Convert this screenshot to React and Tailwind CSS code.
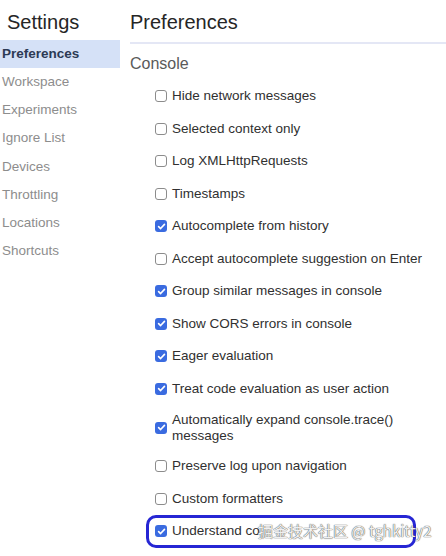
import React from 'react';

const navItems = [
  'Preferences',
  'Workspace',
  'Experiments',
  'Ignore List',
  'Devices',
  'Throttling',
  'Locations',
  'Shortcuts',
];

const options = [
  { label: 'Hide network messages', checked: false },
  { label: 'Selected context only', checked: false },
  { label: 'Log XMLHttpRequests', checked: false },
  { label: 'Timestamps', checked: false },
  { label: 'Autocomplete from history', checked: true },
  { label: 'Accept autocomplete suggestion on Enter', checked: false },
  { label: 'Group similar messages in console', checked: true },
  { label: 'Show CORS errors in console', checked: true },
  { label: 'Eager evaluation', checked: true },
  { label: 'Treat code evaluation as user action', checked: true },
  { label: 'Automatically expand console.trace() messages', checked: true, multi: true },
  { label: 'Preserve log upon navigation', checked: false },
  { label: 'Custom formatters', checked: false },
];

const Checkbox = ({ checked }) =>
  checked ? (
    <span className="w-[12px] h-[12px] shrink-0 rounded-[3px] bg-[#3a6be0] flex items-center justify-center">
      <svg width="9" height="9" viewBox="0 0 10 10" fill="none">
        <path d="M1.8 5.2 L4 7.3 L8.3 2.6" stroke="white" strokeWidth="1.8" strokeLinecap="round" strokeLinejoin="round" />
      </svg>
    </span>
  ) : (
    <span className="w-[12px] h-[12px] shrink-0 rounded-[3px] border border-[#8c8c8c] bg-white" />
  );

const App = () => {
  return (
    <div
      className="w-[446px] h-[556px] bg-white flex overflow-hidden"
      style={{ fontFamily: '"Liberation Sans", Arial, sans-serif' }}
    >
      {/* Sidebar */}
      <div className="w-[120px] shrink-0 pt-[9px]">
        <h1 className="pl-[7px] text-[20px] leading-[26px] text-[#262626]">Settings</h1>
        <div className="mt-[5px]">
          {navItems.map((item, i) => (
            <div
              key={item}
              className={`h-[28.15px] flex items-center pl-[2px] text-[13.5px] ${
                i === 0 ? 'bg-[#d5e1f7] text-[#2c3a55] font-bold' : 'text-[#8d8d8d]'
              }`}
            >
              {item}
            </div>
          ))}
        </div>
      </div>

      {/* Main */}
      <div className="flex-1 pl-[10px]">
        <div className="pt-[9px] pb-[7px] border-b-2 border-[#e4e7f5]">
          <h2 className="text-[20px] leading-[26px] text-[#262626]">Preferences</h2>
        </div>
        <h3 className="mt-[10px] text-[16px] leading-[20px] text-[#5a5a5a]">Console</h3>
        <div className="mt-[6px] pl-[25px]">
          {options.map((opt) => (
            <div
              key={opt.label}
              className={`flex items-center gap-[5px] pr-[20px] ${opt.multi ? 'py-[6.5px]' : 'py-[8.25px]'}`}
            >
              <Checkbox checked={opt.checked} />
              <span className="text-[13.5px] leading-[16px] text-[#303030]">{opt.label}</span>
            </div>
          ))}
          <div className="relative flex items-center gap-[5px] py-[8.25px]">
            <Checkbox checked />
            <span className="text-[13.5px] leading-[16px] text-[#303030]">Understand co</span>
            <div className="absolute left-[-9px] top-[0px] w-[270px] h-[33px] rounded-[10px] border-[3px] border-[#2626d4]" />
            <span
              className="absolute left-[103px] top-[7px] text-[15px] leading-[18px] text-[#f0f0f0] whitespace-nowrap"
              style={{
                fontFamily: '"Noto Sans CJK SC", "Liberation Sans", sans-serif',
                textShadow: '0 0 1px #555, 0 0 1px #555',
              }}
            >
              掘金技术社区 @ tghkitty2
            </span>
          </div>
        </div>
      </div>
    </div>
  );
};

export default App;
